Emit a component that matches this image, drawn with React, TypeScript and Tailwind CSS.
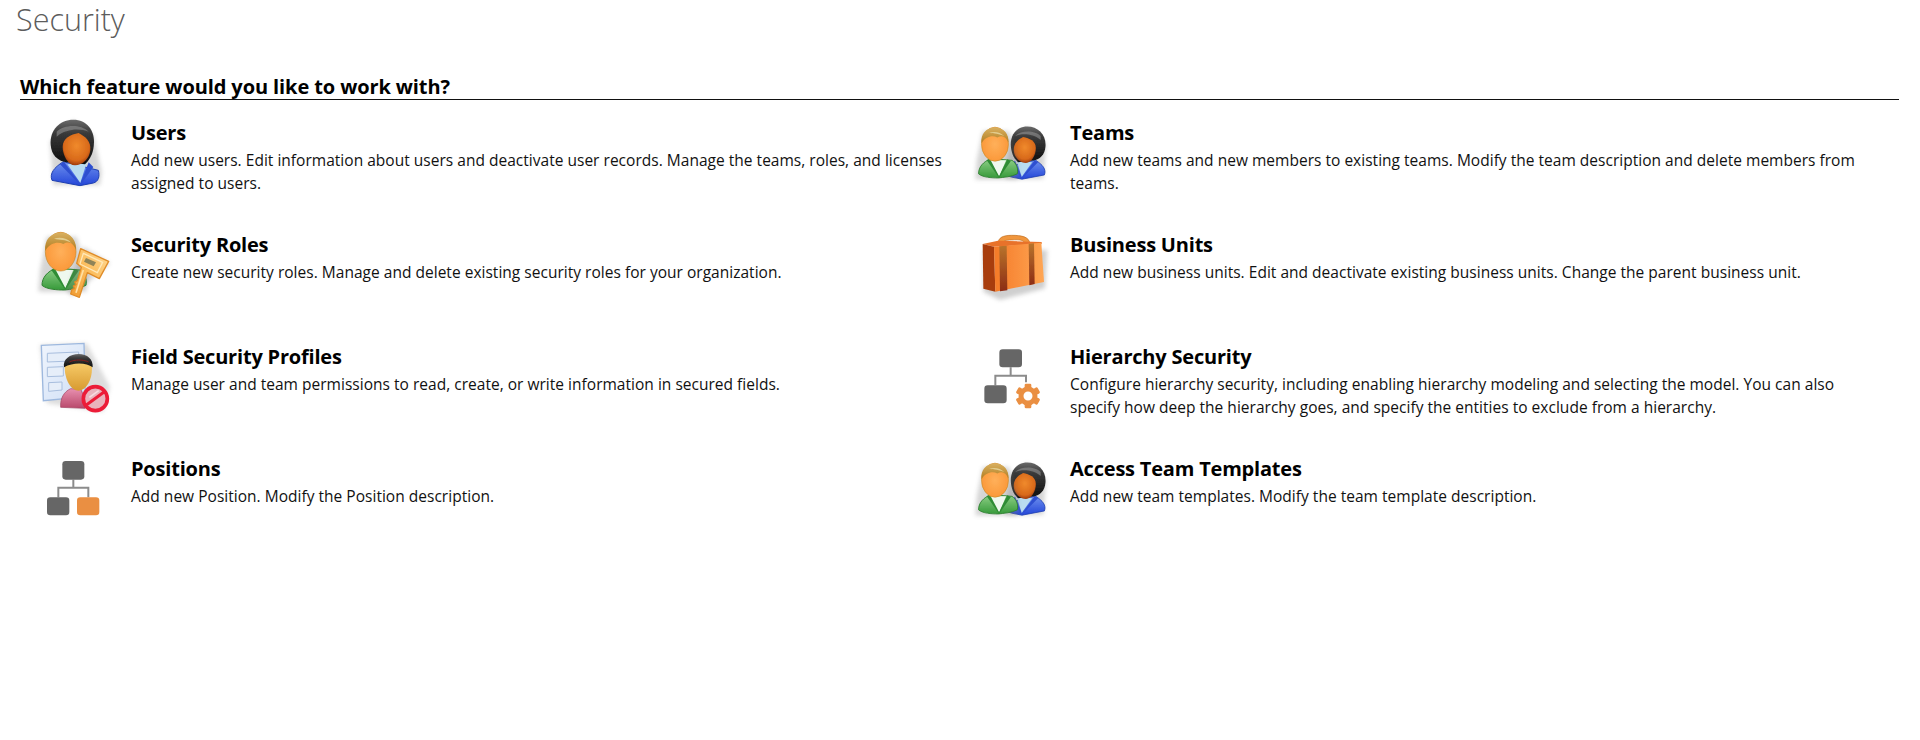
import React from "react";

function Defs() {
  return (
    <svg width="0" height="0" className="absolute">
      <defs>
        <linearGradient id="hair" x1="0" y1="0" x2="0" y2="1">
          <stop offset="0" stopColor="#6a6a6a" />
          <stop offset="0.3" stopColor="#3a3a3a" />
          <stop offset="1" stopColor="#0d0d0d" />
        </linearGradient>
        <radialGradient id="face" cx="0.5" cy="0.4" r="0.65">
          <stop offset="0" stopColor="#f08a2c" />
          <stop offset="0.7" stopColor="#d8691a" />
          <stop offset="1" stopColor="#8a2c08" />
        </radialGradient>
        <linearGradient id="blue" x1="0" y1="0" x2="0" y2="1">
          <stop offset="0" stopColor="#6f90ee" />
          <stop offset="1" stopColor="#2346d8" />
        </linearGradient>
        <radialGradient id="mface" cx="0.5" cy="0.5" r="0.6">
          <stop offset="0" stopColor="#ffb05a" />
          <stop offset="0.8" stopColor="#fb9a3c" />
          <stop offset="1" stopColor="#d88420" />
        </radialGradient>
        <linearGradient id="mhair" x1="0" y1="0" x2="0" y2="1">
          <stop offset="0" stopColor="#d8b060" />
          <stop offset="1" stopColor="#b07c20" />
        </linearGradient>
        <linearGradient id="green" x1="0" y1="0" x2="0" y2="1">
          <stop offset="0" stopColor="#8fd088" />
          <stop offset="1" stopColor="#379a3a" />
        </linearGradient>
        <linearGradient id="keyg" x1="1" y1="0" x2="0" y2="1">
          <stop offset="0" stopColor="#ffdc98" />
          <stop offset="0.5" stopColor="#fbbc5c" />
          <stop offset="1" stopColor="#f09a30" />
        </linearGradient>
        <linearGradient id="gface" x1="0" y1="0" x2="0" y2="1">
          <stop offset="0" stopColor="#ffd878" />
          <stop offset="1" stopColor="#d89a30" />
        </linearGradient>
        <linearGradient id="pink" x1="0" y1="0" x2="0" y2="1">
          <stop offset="0" stopColor="#e890b0" />
          <stop offset="1" stopColor="#b8486a" />
        </linearGradient>
        <linearGradient id="doc" x1="0" y1="0" x2="1" y2="1">
          <stop offset="0" stopColor="#f0f5fd" />
          <stop offset="1" stopColor="#cfdff6" />
        </linearGradient>
        <linearGradient id="case" x1="0" y1="0" x2="1" y2="0">
          <stop offset="0" stopColor="#f47a28" />
          <stop offset="1" stopColor="#ffa654" />
        </linearGradient>
        <linearGradient id="strap" x1="0" y1="0" x2="0" y2="1">
          <stop offset="0" stopColor="#b8742c" />
          <stop offset="1" stopColor="#8c2c14" />
        </linearGradient>
        <filter id="soft" x="-30%" y="-30%" width="160%" height="160%">
          <feGaussianBlur stdDeviation="7" />
        </filter>
        <filter id="px" x="-5%" y="-5%" width="110%" height="110%">
          <feGaussianBlur stdDeviation="1.5" />
        </filter>
      </defs>
    </svg>
  );
}

function Woman() {
  return (
    <g>
      <path d="M70 240 L210 240 L215 200 L190 90 L130 45 L60 110 Z" fill="#777" opacity="0.3" filter="url(#soft)" />
      <g filter="url(#px)">
        <path d="M66 226C58 205 72 188 100 170L205 196C210 215 205 230 190 234L150 242Z" fill="url(#blue)" stroke="#1f3fb0" strokeWidth="3" />
        <path d="M112 178L170 174L151 234Z" fill="#b8dcf0" />
        <path d="M102 170L151 238L176 172L190 186L151 241L90 178Z" fill="#2f50d0" />
        <path d="M62 120C58 75 90 44 130 44C170 44 193 75 192 112C191 140 184 160 165 178L110 172C80 166 65 150 62 120Z" fill="url(#hair)" />
        <path d="M80 80C100 60 150 55 176 80C150 70 110 70 80 95Z" fill="#8a8a8a" opacity="0.65" />
        <path d="M98 125C98 100 122 88 146 84C166 95 183 108 181 135C179 160 158 181 135 181C114 181 98 150 98 125Z" fill="url(#face)" />
      </g>
    </g>
  );
}

function Man() {
  return (
    <g>
      <path d="M25 215L170 215L170 150L140 50L50 50L30 150Z" fill="#777" opacity="0.3" filter="url(#soft)" />
      <g filter="url(#px)">
        <path d="M36 196C36 172 52 155 78 144L150 150C165 160 172 178 168 196C150 206 120 208 104 210C80 210 50 208 36 196Z" fill="url(#green)" stroke="#2e8030" strokeWidth="3" />
        <path d="M70 150L130 150L106 206Z" fill="#eef8ee" />
        <path d="M74 144L106 204L134 146L146 152L106 210L64 150Z" fill="#2f8c34" />
        <ellipse cx="92" cy="95" rx="46" ry="58" fill="url(#mface)" stroke="#c88a28" strokeWidth="2" />
        <path d="M46 92C42 60 62 38 92 38C122 38 140 60 138 90C130 70 118 62 100 72C84 64 60 68 46 92Z" fill="url(#mhair)" />
        <path d="M72 56C90 50 112 54 124 68C106 58 90 60 72 56Z" fill="#e8d8a0" opacity="0.8" />
      </g>
    </g>
  );
}

function Pair() {
  return (
    <g>
      <g transform="translate(276 29) scale(-0.8 0.8)"><Woman /></g>
      <g transform="translate(-6 34) scale(0.88)"><Man /></g>
    </g>
  );
}

function IconUsers() {
  return <Woman />;
}
function IconTeams() {
  return <Pair />;
}
function IconAccess() {
  return <g transform="translate(0 -12)"><Pair /></g>;
}
function IconRoles() {
  return (
    <g>
      <Man />
      <path d="M125 230L240 130L160 80L110 210Z" fill="#777" opacity="0.3" filter="url(#soft)" />
      <g filter="url(#px)">
        <path d="M152 86L236 124L208 176L172 158L148 232L122 222L126 208L134 206L130 198L138 194L134 186L142 182L154 142L140 130Z" fill="url(#keyg)" stroke="#e08c28" strokeWidth="4" strokeLinejoin="round" />
        <path d="M160 100L218 127L202 158L150 132Z" fill="none" stroke="#ffe8b8" strokeWidth="4" />
        <path d="M168 114L198 127L191 139L162 125Z" fill="#8f8458" />
        <path d="M160 150L138 218" stroke="#ffe0a4" strokeWidth="5" />
      </g>
    </g>
  );
}
function IconUnits() {
  return (
    <g>
      <path d="M40 215L90 240L225 205L232 90L40 90Z" fill="#777" opacity="0.35" filter="url(#soft)" />
      <g filter="url(#px)">
        <path d="M84 72C84 52 100 46 125 46C155 46 178 50 180 72L166 72C162 60 150 58 125 60C108 60 98 62 96 72Z" fill="#f0963c" stroke="#c06c20" strokeWidth="2" />
        <path d="M38 72L84 62L215 66L215 72L72 80Z" fill="#e8722a" />
        <path d="M38 72L72 80L76 215L40 206Z" fill="#a83e10" />
        <path d="M72 80L214 68L222 186L76 215Z" fill="url(#case)" />
        <path d="M88 79L110 77L112 211L90 214Z" fill="url(#strap)" />
        <path d="M176 71L192 70L194 192L178 196Z" fill="url(#strap)" />
      </g>
    </g>
  );
}
function IconProfiles() {
  return (
    <g>
      <path d="M30 45L170 40L240 170L220 245L50 220Z" fill="#777" opacity="0.25" filter="url(#soft)" />
      <g filter="url(#px)">
        <path d="M34 46L162 40L166 200L40 212Z" fill="url(#doc)" stroke="#9db8de" strokeWidth="4" />
        <path d="M52 70L146 66L146 92L52 96ZM52 112L100 110L100 138L52 140ZM56 158L96 156L96 180L56 184Z" fill="#e6eef9" stroke="#a8bede" strokeWidth="3" />
        <path d="M92 232C90 205 102 185 122 176L152 178C160 192 165 210 165 235Z" fill="url(#pink)" stroke="#a03c5c" strokeWidth="2" />
        <path d="M104 110C104 90 122 76 146 76C170 76 186 92 186 114C186 150 170 180 146 182C122 182 104 148 104 110Z" fill="url(#gface)" />
        <path d="M102 112C98 88 120 72 146 72C172 72 190 88 188 112C170 98 130 96 102 112Z" fill="url(#hair)" />
        <path d="M118 96C135 88 158 88 176 96" fill="none" stroke="#a81818" strokeWidth="3" opacity="0.7" />
        <circle cx="196" cy="206" r="36" fill="#e9b3bd" stroke="#ec1c38" strokeWidth="11" />
        <path d="M170 224L222 186" stroke="#ec1c38" strokeWidth="9" />
        <path d="M178 202L206 182" stroke="#f6dce0" strokeWidth="5" />
      </g>
    </g>
  );
}
function IconPositions() {
  return (
    <g filter="url(#px)">
      <path d="M130 104V128M85 157V128H175V157" fill="none" stroke="#8c8c8c" strokeWidth="6" />
      <rect x="97" y="48" width="66" height="56" rx="10" fill="#666" />
      <rect x="51" y="157" width="67" height="54" rx="10" fill="#666" />
      <rect x="141" y="157" width="67" height="54" rx="10" fill="#ea8f42" />
    </g>
  );
}
function IconHierarchy() {
  const teeth = [0, 60, 120, 180, 240, 300];
  return (
    <g filter="url(#px)">
      <path d="M122 112V137M76 166V137H168V157" fill="none" stroke="#8c8c8c" strokeWidth="6" />
      <rect x="88" y="58" width="68" height="54" rx="10" fill="#666" />
      <rect x="43" y="166" width="67" height="54" rx="10" fill="#666" />
      <g transform="translate(174 198)">
        {teeth.map((a) => (
          <rect key={a} x="-10" y="-37" width="20" height="18" rx="4" fill="#ea8f42" transform={`rotate(${a})`} />
        ))}
        <circle r="21" fill="none" stroke="#ea8f42" strokeWidth="15" />
      </g>
    </g>
  );
}

type Item = { title: string; text: string; icon: React.ReactNode; shift: number };

const items: Item[] = [
  { title: "Users", text: "Add new users. Edit information about users and deactivate user records. Manage the teams, roles, and licenses assigned to users.", icon: <IconUsers />, shift: 0 },
  { title: "Teams", text: "Add new teams and new members to existing teams. Modify the team description and delete members from teams.", icon: <IconTeams />, shift: 0 },
  { title: "Security Roles", text: "Create new security roles. Manage and delete existing security roles for your organization.", icon: <IconRoles />, shift: 9 },
  { title: "Business Units", text: "Add new business units. Edit and deactivate existing business units. Change the parent business unit.", icon: <IconUnits />, shift: 9 },
  { title: "Field Security Profiles", text: "Manage user and team permissions to read, create, or write information in secured fields.", icon: <IconProfiles />, shift: 3 },
  { title: "Hierarchy Security", text: "Configure hierarchy security, including enabling hierarchy modeling and selecting the model. You can also specify how deep the hierarchy goes, and specify the entities to exclude from a hierarchy.", icon: <IconHierarchy />, shift: 3 },
  { title: "Positions", text: "Add new Position. Modify the Position description.", icon: <IconPositions />, shift: 12 },
  { title: "Access Team Templates", text: "Add new team templates. Modify the team template description.", icon: <IconAccess />, shift: 12 },
];

export default function App() {
  return (
    <div className="h-[740px] bg-white text-black font-['Open_Sans',sans-serif]">
      <Defs />
      <h1 className="pl-[16px] text-[30.5px] leading-[40px] font-light -translate-y-px text-[#5c5c5c]">Security</h1>
      <div className="mx-[20px] mt-[34px] w-[1879px] border-b border-[#111111]">
        <h2 className="text-[20px] leading-[25px] font-bold tracking-[-0.1px]">Which feature would you like to work with?</h2>
      </div>
      <div className="grid grid-cols-[940px_930px] pl-[30px] pt-[5px]">
        {items.map((it) => (
          <div key={it.title} className="group flex h-[112px]">
            <svg width="100" height="100" viewBox="0 0 300 300" className="shrink-0">
              <g transform={`translate(0 ${it.shift})`}>{it.icon}</g>
            </svg>
            <div className="pt-[16px] group-odd:ml-[1px] group-odd:w-[825px] group-even:w-[805px]">
              <div className="text-[20px] leading-[24px] font-bold tracking-[-0.2px]">{it.title}</div>
              <div className="mt-[4px] text-[15.5px] leading-[23px] tracking-[0.02px] text-[#111111]">{it.text}</div>
            </div>
          </div>
        ))}
      </div>
    </div>
  );
}
